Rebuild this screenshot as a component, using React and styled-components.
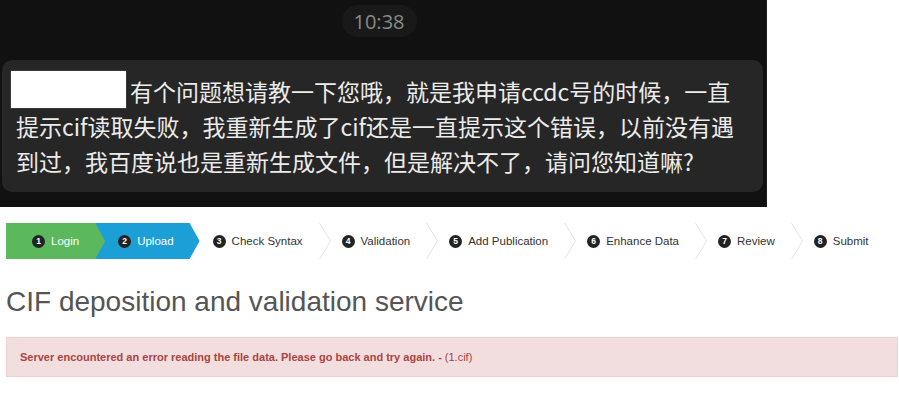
import React from "react";
import styled, { createGlobalStyle, css } from "styled-components";

const Global = createGlobalStyle`
  html, body { margin: 0; padding: 0; background: #fff; }
  body { font-family: "Liberation Sans", Arial, sans-serif; }
`;

const Page = styled.div`
  width: 899px;
  height: 400px;
  overflow: hidden;
  display: flex;
  flex-direction: column;
`;

const ChatPanel = styled.div`
  width: 767px;
  height: 207px;
  box-sizing: border-box;
  background: #111111;
  border-right: 1px solid #1c1c1c;
  padding: 5px 4px 0 2px;
  display: flex;
  flex-direction: column;
`;

const TimePill = styled.div`
  align-self: center;
  margin-left: -6px;
  width: 75px;
  height: 32px;
  border-radius: 16px;
  background: #191919;
  color: #8a8a8a;
  font-family: "Open Sans", "Liberation Sans", sans-serif;
  font-size: 20px;
  display: flex;
  align-items: center;
  justify-content: center;
`;

const Bubble = styled.div`
  margin-top: 23px;
  width: 761px;
  box-sizing: border-box;
  background: #262626;
  border-radius: 10px;
  padding: 9px 10px 13px 8px;
  color: #ececec;
  font-family: "Noto Sans CJK SC", "Noto Sans", sans-serif;
  font-size: 23px;
  display: flex;
  flex-direction: column;
`;

const FirstLine = styled.div`
  display: flex;
  align-items: center;
  height: 40px;
  white-space: nowrap;
`;

const NameMask = styled.span`
  width: 115px;
  height: 37px;
  background: #ffffff;
  border: 1px solid #3a3a3a;
  margin-right: 3px;
  flex: none;
`;

const FirstText = styled.span`
  padding-top: 4px;
`;

const Line = styled.div`
  height: 35px;
  line-height: 35px;
  padding-left: 6px;
  white-space: nowrap;
`;

const Lower = styled.div`
  padding: 16px 0 0 6px;
  display: flex;
  flex-direction: column;
`;

const StepBar = styled.div`
  display: flex;
  height: 36px;
  align-items: stretch;
`;

const variants = {
  done: css`
    background: #5cb85c;
    color: #fff;
  `,
  active: css`
    background: #1c9fd6;
    color: #fff;
  `,
  todo: css`
    background: transparent;
    color: #333;
  `,
};

const Step = styled.div`
  position: relative;
  display: flex;
  align-items: center;
  gap: 6px;
  padding: 0 16px 0 ${(p) => p.$pl}px;
  font-size: 11.5px;
  white-space: nowrap;
  ${(p) => variants[p.$variant]}
  ${(p) =>
    p.$variant !== "todo" &&
    css`
      padding-right: 26px;
      margin-right: -10px;
      z-index: ${p.$z};
      clip-path: polygon(0 0, calc(100% - 10px) 0, 100% 50%, calc(100% - 10px) 100%, 0 100%);
    `}
`;

const Num = styled.span`
  width: 13px;
  height: 13px;
  border-radius: 50%;
  background: #222;
  color: #fff;
  font-size: 8.5px;
  font-weight: bold;
  display: flex;
  align-items: center;
  justify-content: center;
  flex: none;
`;

const Chevron = styled.svg`
  width: 12px;
  height: 36px;
  flex: none;
  display: block;
`;

const Sep = () => (
  <Chevron viewBox="0 0 12 36">
    <polyline points="0.5,0 11.5,18 0.5,36" fill="none" stroke="#e3e3e3" strokeWidth="1" />
  </Chevron>
);

const Title = styled.h1`
  margin: 0;
  padding-top: 27px;
  height: 51px;
  box-sizing: content-box;
  font-size: 28px;
  font-weight: normal;
  color: #555;
  line-height: 32px;
`;

const Alert = styled.div`
  width: 892px;
  height: 40px;
  box-sizing: border-box;
  background: #f2dede;
  border: 1px solid #ebd0d4;
  color: #a94442;
  font-size: 11px;
  display: flex;
  align-items: center;
  padding-left: 13px;
  white-space: nowrap;
`;

const Strong = styled.b`
  font-weight: bold;
  margin-right: 3px;
`;

const steps = [
  { n: 1, label: "Login", variant: "done" },
  { n: 2, label: "Upload", variant: "active" },
  { n: 3, label: "Check Syntax" },
  { n: 4, label: "Validation" },
  { n: 5, label: "Add Publication" },
  { n: 6, label: "Enhance Data" },
  { n: 7, label: "Review" },
  { n: 8, label: "Submit" },
];

export default function App() {
  return (
    <Page>
      <Global />
      <ChatPanel>
        <TimePill>10:38</TimePill>
        <Bubble>
          <FirstLine>
            <NameMask />
            <FirstText>有个问题想请教一下您哦，就是我申请ccdc号的时候，一直</FirstText>
          </FirstLine>
          <Line>提示cif读取失败，我重新生成了cif还是一直提示这个错误，以前没有遇</Line>
          <Line>到过，我百度说也是重新生成文件，但是解决不了，请问您知道嘛?</Line>
        </Bubble>
      </ChatPanel>
      <Lower>
        <StepBar>
          {steps.map((s, i) => {
            const variant = s.variant || "todo";
            const prev = i > 0 ? steps[i - 1].variant : null;
            const pl = i === 0 ? 26 : prev ? 23 : 11;
            return (
              <React.Fragment key={s.n}>
                {i > 2 && <Sep />}
                <Step $variant={variant} $pl={pl} $z={20 - i}>
                  <Num>{s.n}</Num>
                  {s.label}
                </Step>
              </React.Fragment>
            );
          })}
        </StepBar>
        <Title>CIF deposition and validation service</Title>
        <Alert>
          <Strong>Server encountered an error reading the file data. Please go back and try again. -</Strong>
          (1.cif)
        </Alert>
      </Lower>
    </Page>
  );
}
